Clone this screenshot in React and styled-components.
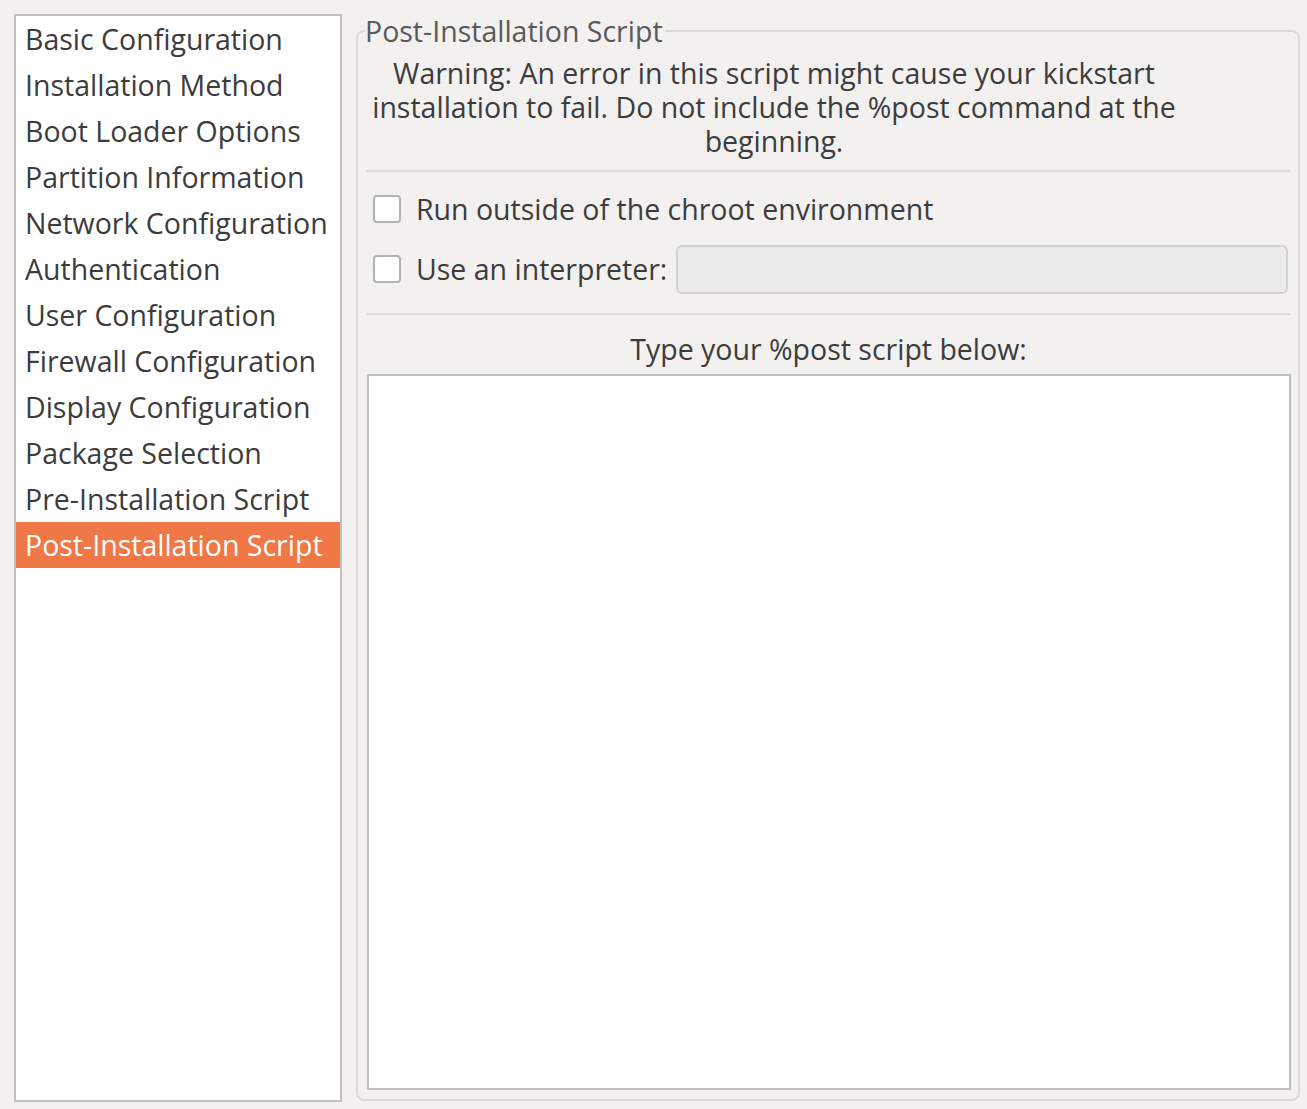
import React from 'react';
import styled, { createGlobalStyle } from 'styled-components';

const GlobalStyle = createGlobalStyle`
  html, body {
    margin: 0;
    padding: 0;
    background: #f2f1f0;
  }
  body {
    font-family: 'Open Sans', 'Noto Sans', sans-serif;
    color: #3c3c3c;
  }
`;

const Window = styled.div`
  display: flex;
  align-items: flex-start;
  gap: 14px;
  width: 1307px;
  height: 1109px;
  box-sizing: border-box;
  padding: 14px 7px 0 14px;
`;

const Sidebar = styled.ul`
  list-style: none;
  margin: 0;
  padding: 0;
  width: 328px;
  height: 1088px;
  box-sizing: border-box;
  background: #ffffff;
  border: 2px solid #c2c0bc;
  flex-shrink: 0;
`;

const Item = styled.li`
  height: 46px;
  line-height: 46px;
  padding-left: 9px;
  font-size: 28.5px;
  white-space: nowrap;
  color: ${p => (p.$active ? '#ffffff' : '#3c3c3c')};
  background: ${p => (p.$active ? '#f07746' : 'transparent')};
`;

const Frame = styled.fieldset`
  flex: 1;
  margin: 2px 0 0 0;
  height: 1085px;
  box-sizing: border-box;
  border: 2px solid #dcdad6;
  border-radius: 8px;
  padding: 0 8px 9px 9px;
  min-width: 0;
  display: flex;
  flex-direction: column;
`;

const Legend = styled.legend`
  padding: 0 2px 0 0;
  margin-left: -2px;
  font-size: 28.5px;
  color: #5a5a5a;
  line-height: 30px;
`;

const Warning = styled.p`
  margin: 10px 0 0 0;
  width: 814px;
  text-align: center;
  font-size: 28.5px;
  line-height: 34px;
`;

const Separator = styled.hr`
  border: none;
  border-top: 2px solid #dddbd7;
  margin: ${p => p.$top}px 0 0 0;
  width: 100%;
`;

const CheckRow = styled.label`
  display: flex;
  align-items: center;
  gap: 15px;
  height: 50px;
  margin-top: ${p => p.$top}px;
  padding-left: 6px;
  font-size: 28.5px;
  white-space: nowrap;
`;

const Box = styled.span`
  width: 24px;
  height: 24px;
  flex-shrink: 0;
  border: 2px solid #b4b2ad;
  border-radius: 4px;
  background: #ffffff;
`;

const Entry = styled.div`
  flex: 1;
  height: 49px;
  box-sizing: border-box;
  margin-left: -6px;
  margin-right: 2px;
  background: #ebebeb;
  border: 2px solid #d4d2ce;
  border-radius: 6px;
`;

const Caption = styled.div`
  margin-top: 16px;
  text-align: center;
  font-size: 28.5px;
  line-height: 36px;
`;

const ScriptArea = styled.div`
  flex: 1;
  margin-top: 7px;
  margin-right: -1px;
  background: #ffffff;
  border: 2px solid #c2c0bc;
`;

const items = [
  'Basic Configuration',
  'Installation Method',
  'Boot Loader Options',
  'Partition Information',
  'Network Configuration',
  'Authentication',
  'User Configuration',
  'Firewall Configuration',
  'Display Configuration',
  'Package Selection',
  'Pre-Installation Script',
  'Post-Installation Script',
];

export default function App() {
  return (
    <>
      <GlobalStyle />
      <Window>
        <Sidebar>
          {items.map((name, i) => (
            <Item key={name} $active={i === items.length - 1}>
              {name}
            </Item>
          ))}
        </Sidebar>
        <Frame>
          <Legend>Post-Installation Script</Legend>
          <Warning>
            Warning: An error in this script might cause your kickstart
            installation to fail. Do not include the %post command at the
            beginning.
          </Warning>
          <Separator $top={12} />
          <CheckRow $top={12}>
            <Box />
            Run outside of the chroot environment
          </CheckRow>
          <CheckRow $top={10}>
            <Box />
            Use an interpreter:
            <Entry />
          </CheckRow>
          <Separator $top={19} />
          <Caption>Type your %post script below:</Caption>
          <ScriptArea />
        </Frame>
      </Window>
    </>
  );
}
